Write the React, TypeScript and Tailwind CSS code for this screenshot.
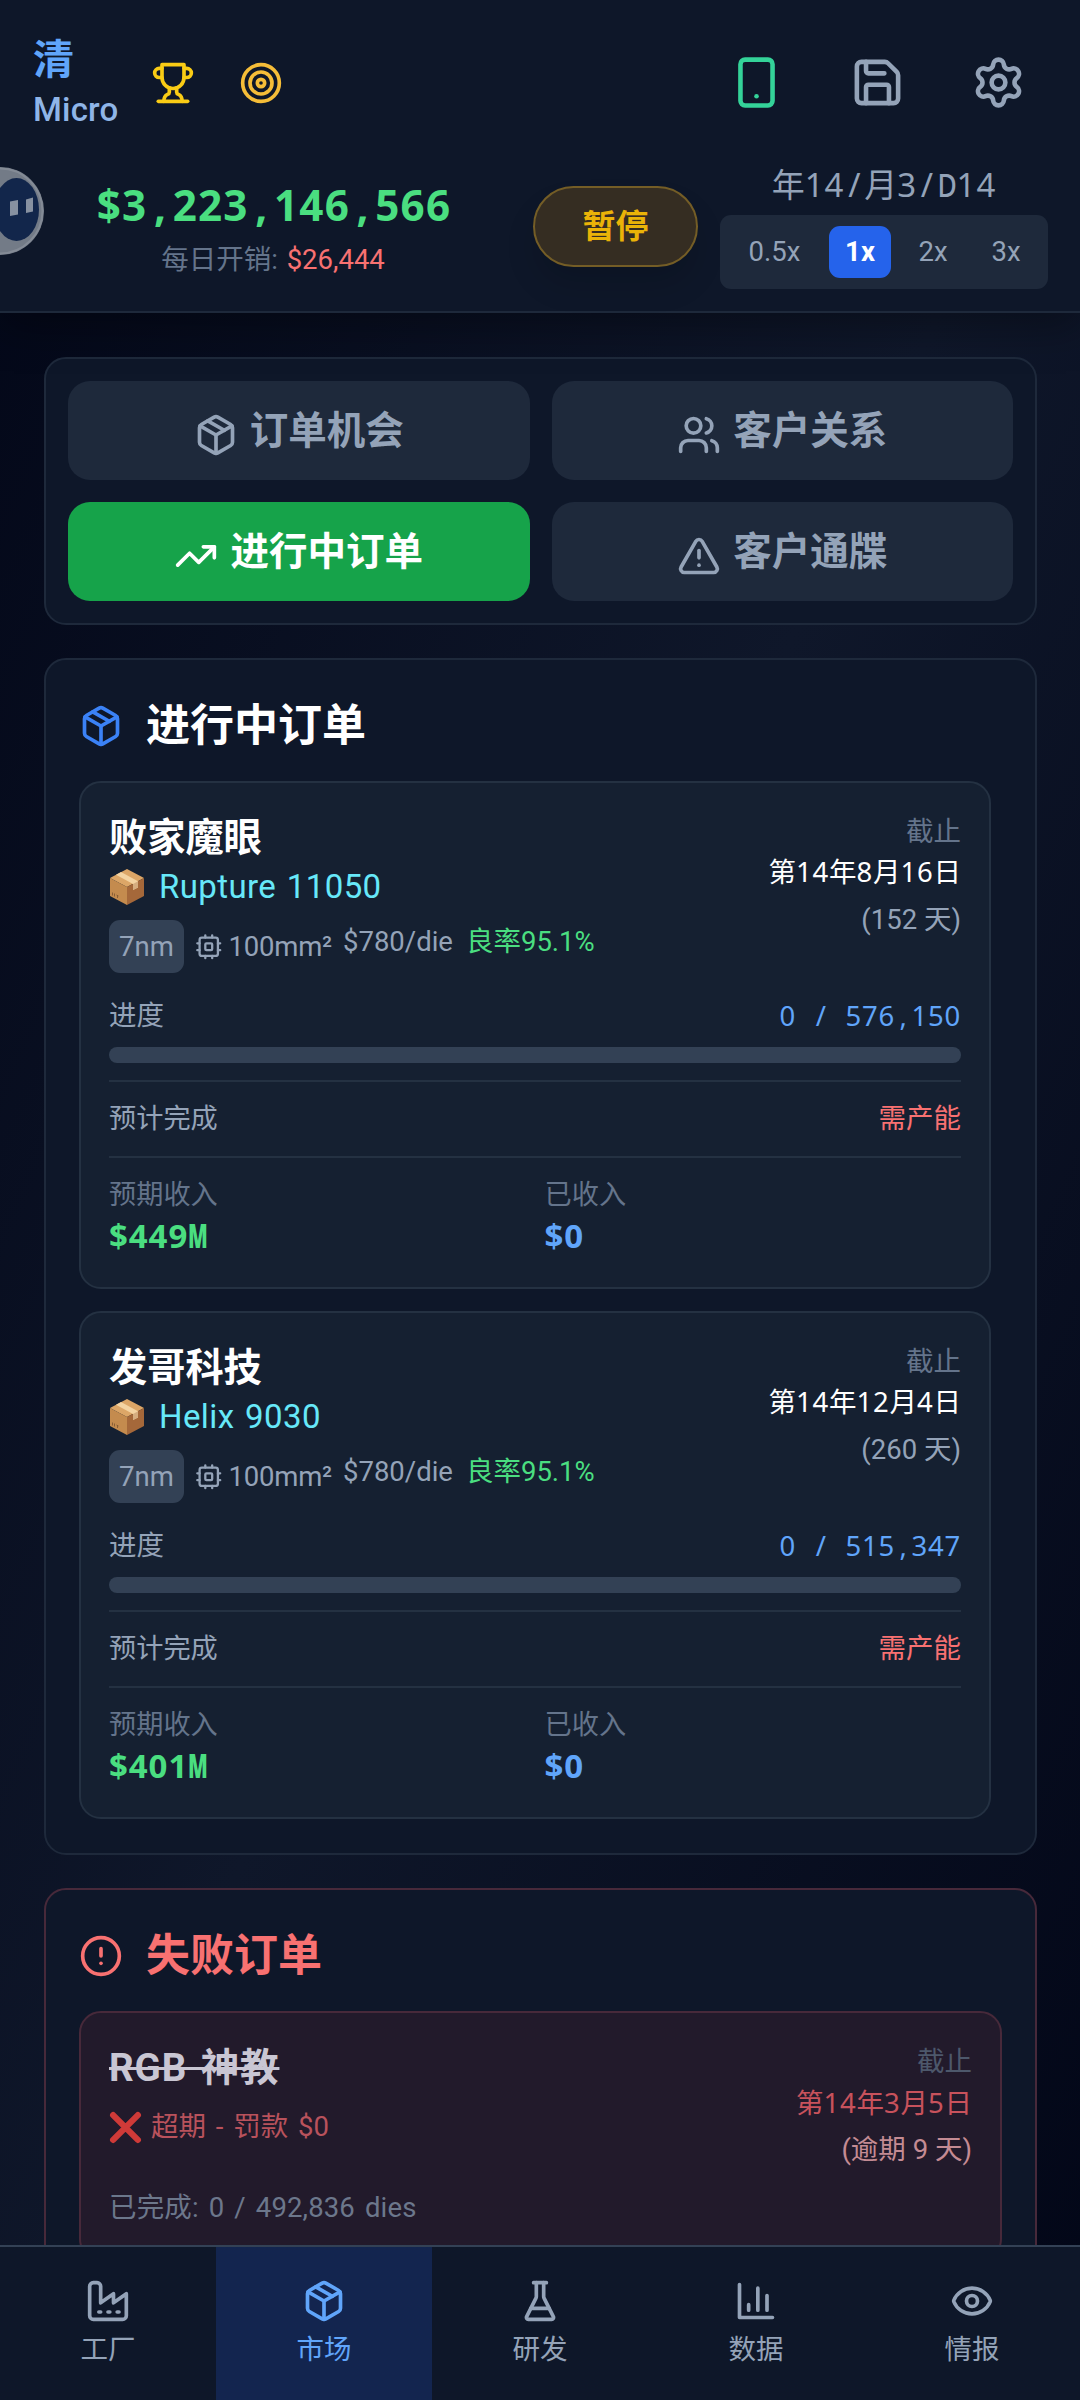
import { AlertCircle, Eye, Save, Settings, Smartphone, Target, TrendingUp, TriangleAlert, Users } from 'lucide-react'
import type { ReactNode } from 'react'

type IconProps = { className?: string }

function Icon({ className, children }: IconProps & { children: ReactNode }) {
  return (
    <svg viewBox="0 0 24 24" fill="none" stroke="currentColor" strokeWidth="2" strokeLinecap="round" strokeLinejoin="round" className={className}>
      {children}
    </svg>
  )
}

const TrophyIcon = ({ className }: IconProps) => (
  <Icon className={className}>
    <path d="M6 9H4.5a2.5 2.5 0 0 1 0-5H6" />
    <path d="M18 9h1.5a2.5 2.5 0 0 0 0-5H18" />
    <path d="M4 22h16" />
    <path d="M10 14.66V17c0 .55-.47.98-.97 1.21C7.85 18.75 7 20.24 7 22" />
    <path d="M14 14.66V17c0 .55.47.98.97 1.21C16.15 18.75 17 20.24 17 22" />
    <path d="M18 2H6v7a6 6 0 0 0 12 0V2Z" />
  </Icon>
)

const PackageIcon = ({ className }: IconProps) => (
  <Icon className={className}>
    <path d="m7.5 4.27 9 5.15" />
    <path d="M21 8a2 2 0 0 0-1-1.73l-7-4a2 2 0 0 0-2 0l-7 4A2 2 0 0 0 3 8v8a2 2 0 0 0 1 1.73l7 4a2 2 0 0 0 2 0l7-4A2 2 0 0 0 21 16Z" />
    <path d="m3.3 7 8.7 5 8.7-5" />
    <path d="M12 22V12" />
  </Icon>
)

const CpuIcon = ({ className }: IconProps) => (
  <Icon className={className}>
    <rect x="4" y="4" width="16" height="16" rx="2" />
    <rect x="9" y="9" width="6" height="6" rx="1" />
    <path d="M15 2v2M15 20v2M2 15h2M2 9h2M20 15h2M20 9h2M9 2v2M9 20v2" />
  </Icon>
)

const FactoryIcon = ({ className }: IconProps) => (
  <Icon className={className}>
    <path d="M2 20a2 2 0 0 0 2 2h16a2 2 0 0 0 2-2V8l-7 5V8l-7 5V4a2 2 0 0 0-2-2H4a2 2 0 0 0-2 2Z" />
    <path d="M17 18h1M12 18h1M7 18h1" />
  </Icon>
)

const FlaskIcon = ({ className }: IconProps) => (
  <Icon className={className}>
    <path d="M10 2v7.527a2 2 0 0 1-.211.896L4.72 20.55a1 1 0 0 0 .9 1.45h12.76a1 1 0 0 0 .9-1.45l-5.069-10.127A2 2 0 0 1 14 9.527V2" />
    <path d="M8.5 2h7M7 16h10" />
  </Icon>
)

const ChartIcon = ({ className }: IconProps) => (
  <Icon className={className}>
    <path d="M3 3v18h18M18 17V9M13 17V5M8 17v-3" />
  </Icon>
)

// Cardboard box emoji
const BoxEmoji = () => (
  <svg viewBox="0 0 36 38" className="h-[38px] w-[36px]">
    <path d="M18 1 35 10 18 19 1 10Z" fill="#dca667" />
    <path d="M1 10 18 19V37L1 28Z" fill="#c48b4e" />
    <path d="M35 10 18 19V37L35 28Z" fill="#a5683a" />
    <path d="M12 4 29 13.2V19.5L24 22V16L7 6.8Z" fill="#f3d3a2" />
    <path d="M24 16 29 13.2V19.5L24 22Z" fill="#d5ad80" />
    <path d="M3.5 24.5v3M5.5 25.5v3M7.5 27l2 1M8.5 27.5v2.5" stroke="#7c5430" strokeWidth="0.8" />
  </svg>
)

const CrossEmoji = () => (
  <svg viewBox="0 0 32 32" className="h-[33px] w-[33px]">
    <path d="M4 4 28 28M28 4 4 28" stroke="#cf3a38" strokeWidth="6" strokeLinecap="round" />
  </svg>
)

function Mono({ children }: { children: string }) {
  return (
    <span className="whitespace-pre tracking-[0.028em] [font-family:'Noto_Sans','Noto_Sans_CJK_SC',sans-serif]">
      {children.split(/([ ,/MD])/).map((part, i) => {
        if (part === 'M' || part === 'D') {
          return (
            <span key={i} className="inline-flex w-[0.6em] justify-center tracking-normal">
              <span className={part === 'M' ? 'scale-x-[0.62] font-black' : 'scale-x-[0.8] font-medium'}>{part}</span>
            </span>
          )
        }
        if (/^[ ,/]$/.test(part)) {
          return <span key={i} className="inline-block w-[0.6em] text-center tracking-normal">{part}</span>
        }
        return part.split(/([一-龥]+)/).map((run, j) => (
          /[一-龥]/.test(run) ? <span key={`${i}-${j}`} className="tracking-normal">{run}</span> : run
        ))
      })}
    </span>
  )
}

const ORDERS = [
  { name: '败家魔眼', chip: 'Rupture 11050', due: '第14年8月16日', days: 152, total: '576,150', income: '$449M' },
  { name: '发哥科技', chip: 'Helix 9030', due: '第14年12月4日', days: 260, total: '515,347', income: '$401M' },
]

const TABS = [
  { label: '订单机会', icon: PackageIcon, active: false },
  { label: '客户关系', icon: Users, active: false },
  { label: '进行中订单', icon: TrendingUp, active: true },
  { label: '客户通牒', icon: TriangleAlert, active: false },
]

const NAV = [
  { label: '工厂', icon: FactoryIcon, active: false },
  { label: '市场', icon: PackageIcon, active: true },
  { label: '研发', icon: FlaskIcon, active: false },
  { label: '数据', icon: ChartIcon, active: false },
  { label: '情报', icon: Eye, active: false },
]

const SPEEDS = ['0.5x', '1x', '2x', '3x']

function Header() {
  return (
    <header className="relative z-10 h-[313px] shrink-0 border-b-2 border-[#1e293b] bg-[#0e1729] shadow-[0_12px_40px_rgba(0,0,0,0.35)]">
      <div className="flex h-[165px] items-center pl-[33px]">
        <div className="flex w-[98px] flex-col pt-[3px]">
          <span className="text-[41px] leading-[50px] font-bold text-[#60a5fa]">清</span>
          <span className="text-[33px] leading-[49px] font-medium tracking-[0.2px] text-[#8fb5e8]">Micro</span>
        </div>
        <TrophyIcon className="ml-5 h-11 w-11 text-[#facc15]" />
        <Target className="ml-11 h-11 w-11 text-[#f5bd38]" />
        <div className="ml-auto flex items-center gap-[66px] pr-[54px]">
          <Smartphone className="h-[55px] w-[55px] text-[#34d399]" />
          <Save className="h-[55px] w-[55px] text-[#94a3b8]" />
          <Settings className="h-[55px] w-[55px] text-[#94a3b8]" />
        </div>
      </div>

      <div className="flex items-start">
        <div className="ml-[80px] w-[386px] pt-[9px] text-center">
          <div className="pl-[2px] text-[42.2px] leading-[62px] font-bold text-[#4ade80]"><Mono>$3,223,146,566</Mono></div>
          <div className="mt-[4px] text-[27.5px] leading-[36px] text-[#64748b] [word-spacing:2px]">
            每日开销: <span className="text-[#f87171]">$26,444</span>
          </div>
        </div>
        <button className="mt-[21px] ml-[67px] h-[81px] w-[165px] rounded-full border-2 border-[#745d26] bg-[#352d22] text-[33px] font-bold text-[#eab308] shadow-[0_20px_30px_rgba(0,0,0,0.12)]">
          暂停
        </button>
        <div className="ml-[22px] flex w-[328px] flex-col items-center">
          <div className="h-[50px] text-[33px] leading-[39px] text-[#94a3b8]"><Mono>年14/月3/D14</Mono></div>
          <div className="flex h-[74px] w-full items-center gap-[11px] rounded-[11px] bg-[#1e293b] p-[11px]">
            {SPEEDS.map(speed => (
              <button
                key={speed}
                className={speed === '1x'
                  ? 'h-[52px] w-[62px] rounded-[11px] bg-[#2563eb] text-[27.5px] font-bold text-white'
                  : 'h-[52px] min-w-[62px] rounded-[11px] text-[27.5px] text-[#94a3b8] first:w-[87px]'}
              >
                {speed}
              </button>
            ))}
          </div>
        </div>
      </div>

      {/* Assistant bubble docked to the left edge */}
      <svg viewBox="0 0 48 96" className="absolute top-[163px] left-0 h-[96px] w-[48px]">
        <circle cx="0" cy="48" r="44" fill="#737b87" />
        <path d="M0 5.5A42.5 42.5 0 0 1 0 90.5" fill="none" stroke="#848b96" strokeWidth="2" />
        <ellipse cx="16.5" cy="46.5" rx="22.5" ry="31.5" fill="#12264b" />
        <path d="M10 38.5 18 37V51.500L10 53ZM26 36.500 33 34.500V48.500L26 50Z" fill="#8791a1" />
      </svg>
    </header>
  )
}

function OrderCard({ order }: { order: (typeof ORDERS)[number] }) {
  return (
    <div className="h-[508px] w-[912px] rounded-[22px] border-2 border-[#243142] bg-[#152031] px-[28px] pt-[28px] text-[27.5px]">
      <div className="flex h-[190px] justify-between">
        <div>
          <div className="text-[38.2px] leading-[54px] font-bold text-white">{order.name}</div>
          <div className="flex h-[44px] items-center gap-[14px] text-[33px] leading-[44px] tracking-[0.4px] text-[#67e8f9] [word-spacing:2px]">
            <BoxEmoji />
            {order.chip}
          </div>
          <div className="mt-[11px] flex h-[53px] gap-[11px] text-[#94a3b8]">
            <span className="flex h-[53px] w-[75px] items-center justify-center rounded-[11px] bg-[#334155] pt-[1px]">7nm</span>
            <span className="flex items-center gap-[6px] pt-[1px] tracking-[-0.2px]">
              <CpuIcon className="h-[27.5px] w-[27.5px]" />
              100mm²
            </span>
            <span className="leading-[43px]">$780/die</span>
            <span className="pl-[2px] leading-[43px] text-[#4ade80]">良率95.1%</span>
          </div>
        </div>
        <div className="flex flex-col items-end">
          <div className="h-[42px] leading-[42px] text-[#64748b]">截止</div>
          <div className="h-[42px] leading-[37px] text-white"><Mono>{order.due}</Mono></div>
          <div className="mt-[4px] leading-[42px] text-[#94a3b8]">({order.days} 天)</div>
        </div>
      </div>

      <div className="flex h-[46px] justify-between leading-[30px]">
        <span className="text-[#94a3b8]">进度</span>
        <span className="text-[#60a5fa]"><Mono>{`0 / ${order.total}`}</Mono></span>
      </div>
      <div className="h-[16px] rounded-full bg-[#334155]" />

      <div className="mt-[17px] flex h-[76px] items-center justify-between border-t-2 border-[#243142]">
        <span className="text-[27.2px] text-[#94a3b8]">预计完成</span>
        <span className="text-[#f87171]">需产能</span>
      </div>
      <div className="grid grid-cols-2 gap-[19px] border-t-2 border-[#243142] pt-[17px]">
        <div>
          <div className="text-[27.2px] leading-[41px] text-[#64748b]">预期收入</div>
          <div className="text-[33px] leading-[39px] font-bold text-[#4ade80]"><Mono>{order.income}</Mono></div>
        </div>
        <div>
          <div className="text-[27.2px] leading-[41px] text-[#64748b]">已收入</div>
          <div className="text-[33px] leading-[39px] font-bold text-[#60a5fa]"><Mono>$0</Mono></div>
        </div>
      </div>
    </div>
  )
}

function FailedCard() {
  return (
    <div className="h-[250px] rounded-[22px] border-2 border-[#47293a] bg-[#221a2b] px-[28px] pt-[28px] text-[27.5px]">
      <div className="flex h-[144px] justify-between">
        <div>
          <div className="text-[38.5px] leading-[54px] font-bold tracking-[0.9px] text-[#c9c6d3] line-through [word-spacing:3px]">RGB 神教</div>
          <div className="mt-[12px] flex h-[40px] items-center gap-[9px] text-[#b9525c] [word-spacing:3px]">
            <CrossEmoji />
            超期 - 罚款 $0
          </div>
        </div>
        <div className="flex flex-col items-end">
          <div className="h-[42px] leading-[42px] text-[#4d586b]">截止</div>
          <div className="h-[42px] leading-[39px] text-[#c8525c]"><Mono>第14年3月5日</Mono></div>
          <div className="mt-[4px] leading-[42px] text-[#c48b93]">(逾期 9 天)</div>
        </div>
      </div>
      <div className="mt-[4px] leading-[38px] tracking-[0.15px] text-[#6c778b] [word-spacing:3px]">已完成: 0 / 492,836 dies</div>
    </div>
  )
}

export default function App() {
  return (
    <div className="flex h-[2400px] w-[1080px] flex-col overflow-hidden bg-[linear-gradient(to_bottom_right,#020617,#0f172a,#020617)] [font-family:Roboto,'Noto_Sans_CJK_SC',sans-serif]">
      <Header />

      <main className="min-h-0 flex-1 space-y-[33px] overflow-hidden pt-[44px] pr-[43px] pl-[44px]">
        <section className="grid h-[268px] grid-cols-2 gap-[22px] rounded-[22px] border-2 border-[#1e293b] bg-[#0e1729] p-[22px]">
          {TABS.map(({ label, icon: TabIcon, active }) => (
            <button
              key={label}
              className={`flex h-[99px] items-center justify-center gap-[12px] rounded-[22px] text-[38.5px] font-bold ${active ? 'bg-[#16a34a] text-white' : 'bg-[#1e293b] text-[#94a3b8]'}`}
            >
              <TabIcon className="mt-[9px] h-11 w-11" />
              {label}
            </button>
          ))}
        </section>

        <section className="h-[1197px] rounded-[22px] border-2 border-[#1e293b] bg-[#0e1729] px-[33px] pt-[33px]">
          <h2 className="flex h-[66px] items-center gap-[23px] text-[44px] font-bold text-white">
            <PackageIcon className="h-11 w-11 text-[#3b82f6]" />
            进行中订单
          </h2>
          <div className="mt-[22px] space-y-[22px]">
            {ORDERS.map(order => <OrderCard key={order.name} order={order} />)}
          </div>
        </section>

        <section className="h-[440px] rounded-[22px] border-2 border-[#47293a] bg-[#0e1729] px-[33px] pt-[33px]">
          <h2 className="flex h-[66px] items-center gap-[23px] text-[44px] font-bold text-[#f87171]">
            <AlertCircle className="h-11 w-11" />
            失败订单
          </h2>
          <div className="mt-[22px]">
            <FailedCard />
          </div>
        </section>
      </main>

      <nav className="grid h-[155px] shrink-0 grid-cols-5 border-t-2 border-[#334155] bg-[#0e1729]">
        {NAV.map(({ label, icon: NavIcon, active }) => (
          <button
            key={label}
            className={`flex flex-col items-center pt-[32px] text-[27.5px] leading-[42px] ${active ? 'bg-[#13254f] text-[#60a5fa]' : 'text-[#94a3b8]'}`}
          >
            <NavIcon className="mb-[6px] h-11 w-11" />
            {label}
          </button>
        ))}
      </nav>
    </div>
  )
}
